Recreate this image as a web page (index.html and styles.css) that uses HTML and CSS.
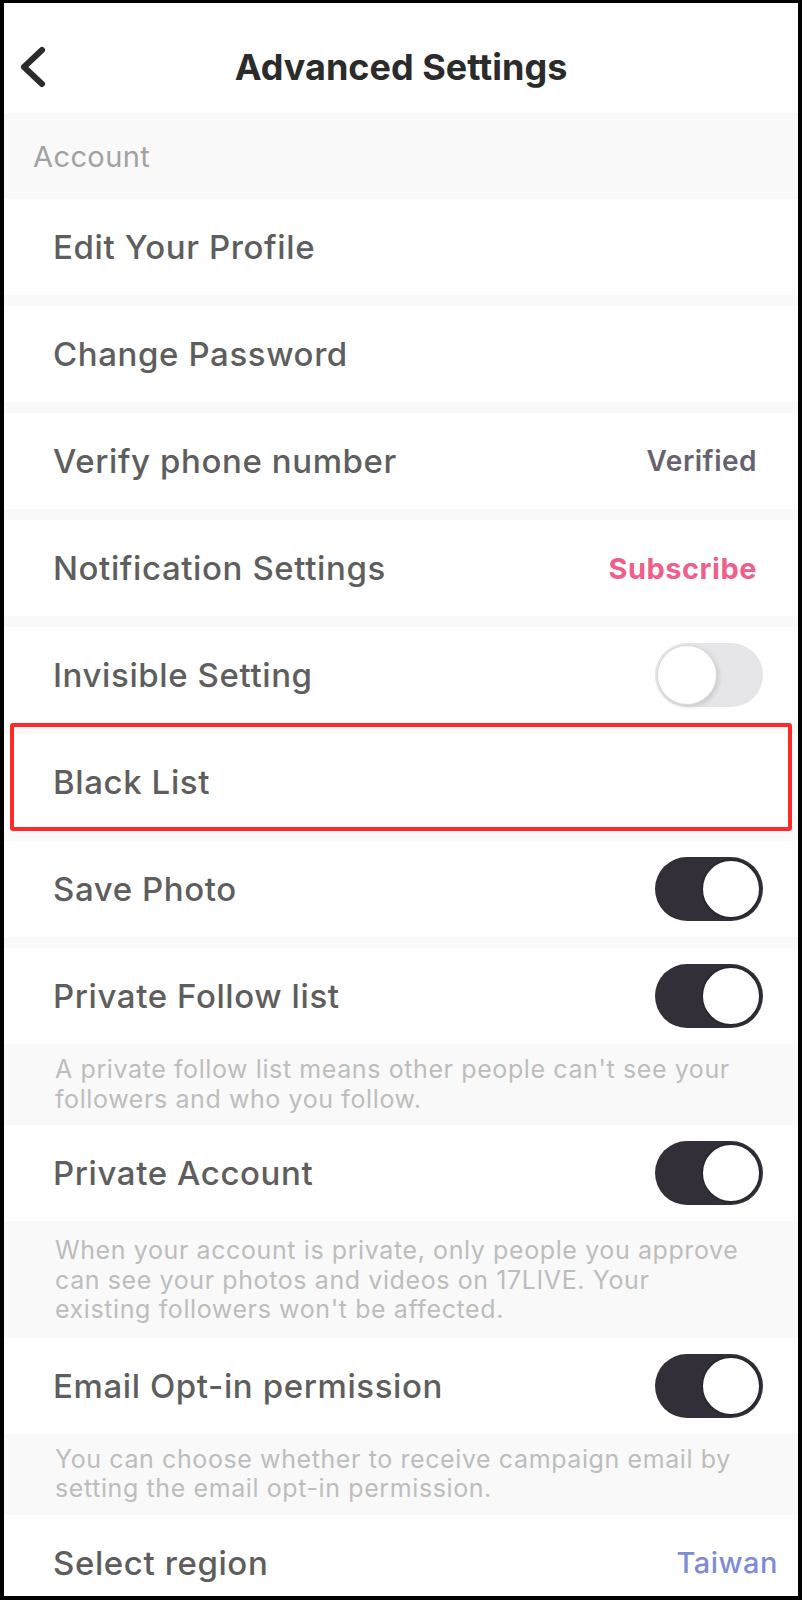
FILE: index.html
```html
<!DOCTYPE html>
<html>
<head>
    <title>Advanced Settings</title>
    <link rel="stylesheet" href="styles.css">
</head>
<body>
    <div class="frame">
        <header class="topbar">
            <button class="back" aria-label="Back">
                <svg width="30" height="46" viewBox="0 0 30 46">
                    <polyline points="24,6 6,23 24,40" fill="none" stroke="#2b2b2b" stroke-width="6" stroke-linecap="round" stroke-linejoin="round"/>
                </svg>
            </button>
            <h1 class="title">Advanced Settings</h1>
            <span></span>
        </header>

        <div class="section-head">Account</div>

        <div class="row"><span class="label">Edit Your Profile</span></div>
        <div class="row"><span class="label">Change Password</span></div>
        <div class="row">
            <span class="label">Verify phone number</span>
            <span class="value">Verified</span>
        </div>
        <div class="row">
            <span class="label">Notification Settings</span>
            <span class="value pink">Subscribe</span>
        </div>
        <div class="row">
            <span class="label">Invisible Setting</span>
            <span class="toggle"></span>
        </div>
        <div class="row marked">
            <span class="label">Black List</span>
            <span class="highlight"></span>
        </div>
        <div class="row">
            <span class="label">Save Photo</span>
            <span class="toggle on"></span>
        </div>
        <div class="row flush">
            <span class="label">Private Follow list</span>
            <span class="toggle on"></span>
        </div>
        <p class="note">A private follow list means other people can't see your<br>followers and who you follow.</p>
        <div class="row flush">
            <span class="label">Private Account</span>
            <span class="toggle on"></span>
        </div>
        <p class="note tall">When your account is private, only people you approve<br>can see your photos and videos on 17LIVE. Your<br>existing followers won't be affected.</p>
        <div class="row flush">
            <span class="label">Email Opt-in permission</span>
            <span class="toggle on"></span>
        </div>
        <p class="note">You can choose whether to receive campaign email by<br>setting the email opt-in permission.</p>
        <div class="row">
            <span class="label">Select region</span>
            <span class="value blue">Taiwan</span>
        </div>
    </div>
</body>
</html>
```

FILE: styles.css
```css
body {
    margin: 0;
    background-color: #000;
    font-family: Inter, "Noto Sans", "Liberation Sans", sans-serif;
}

.frame {
    height: 1600px;
    box-sizing: border-box;
    border: 4px solid #000;
    border-top-width: 3px;
    background-color: #f9f9f9;
    overflow: hidden;
}

.topbar {
    height: 110px;
    box-sizing: border-box;
    padding-top: 18px;
    background-color: #fff;
    display: grid;
    grid-template-columns: 1fr auto 1fr;
    align-items: center;
}

.back {
    justify-self: start;
    margin-left: 14px;
    padding: 0;
    border: none;
    background: none;
    display: flex;
}

.title {
    margin: 0;
    font-size: 36px;
    font-weight: 700;
    color: #2b2b2b;
}

.section-head {
    height: 86px;
    padding-left: 29px;
    display: flex;
    align-items: center;
    font-size: 29px;
    letter-spacing: 0.4px;
    color: #a2a2a2;
}

.row {
    height: 96px;
    box-sizing: border-box;
    margin-bottom: 11px;
    padding: 0 35px 0 49px;
    background-color: #fff;
    display: flex;
    justify-content: space-between;
    align-items: center;
}

.row.flush {
    margin-bottom: 0;
}

.row.marked {
    position: relative;
}

.label {
    font-size: 33px;
    font-weight: 500;
    letter-spacing: 0.6px;
    color: #5e5e5e;
}

.value {
    margin-right: 6px;
    font-size: 28px;
    font-weight: 600;
    letter-spacing: 0.5px;
    color: #666270;
}

.value.pink {
    font-size: 29px;
    font-weight: 700;
    color: #ee5f8c;
}

.value.blue {
    margin-right: -15px;
    font-size: 29px;
    font-weight: 500;
    color: #7e8cd6;
}

.highlight {
    position: absolute;
    top: -11px;
    bottom: -1px;
    left: 6px;
    right: 6px;
    border: 4px solid #ff2b2b;
    border-radius: 3px;
}

.toggle {
    width: 108px;
    height: 64px;
    box-sizing: border-box;
    border-radius: 32px;
    background-color: #e6e6e8;
    display: flex;
    align-items: center;
    padding: 0 2px;
}

.toggle::after {
    content: "";
    width: 60px;
    height: 60px;
    box-sizing: border-box;
    border-radius: 50%;
    background-color: #fff;
    border: 1px solid #dadada;
    box-shadow: 2px 2px 5px rgba(0, 0, 0, 0.12);
}

.toggle.on {
    background-color: #332f38;
    justify-content: flex-end;
}

.toggle.on::after {
    border: 2px solid #2a2730;
    box-shadow: none;
}

.note {
    margin: 0;
    padding: 11px 30px 11px 51px;
    font-size: 25px;
    letter-spacing: 0.6px;
    line-height: 29.5px;
    color: #bdbdbd;
}

.note.tall {
    padding-top: 15px;
    padding-bottom: 13px;
}
```
